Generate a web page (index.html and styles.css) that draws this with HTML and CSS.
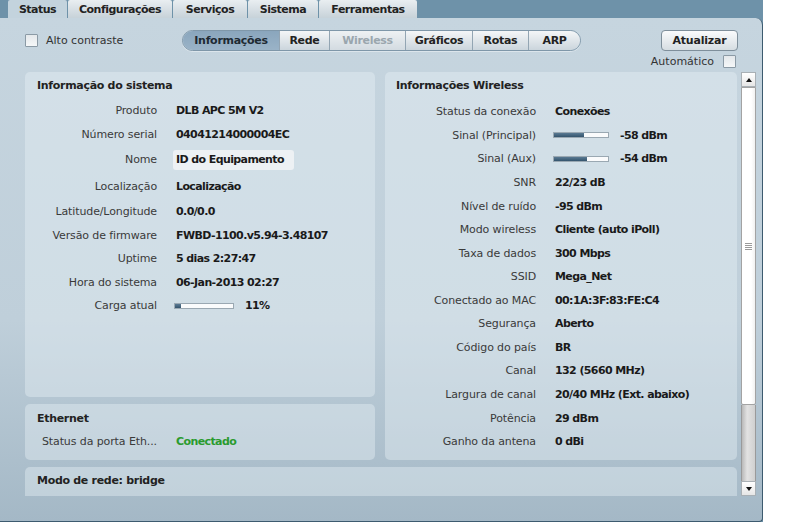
FILE: index.html
```html
<!DOCTYPE html>
<html lang="pt">
<head>
<meta charset="utf-8">
<title>Status</title>
<link rel="stylesheet" href="styles.css">
</head>
<body>
<div class="app">
  <nav class="tabs">
    <div class="tab tab-active w-status">Status</div>
    <div class="tab w-config">Configurações</div>
    <div class="tab w-serv">Serviços</div>
    <div class="tab w-sis">Sistema</div>
    <div class="tab w-ferr">Ferramentas</div>
  </nav>
  <main class="main">
    <div class="toolbar">
      <label class="contrast"><span class="check"></span>Alto contraste</label>
      <div class="seg">
        <div class="seg-item seg-active s1">Informações</div>
        <div class="seg-item s2">Rede</div>
        <div class="seg-item seg-disabled s3">Wireless</div>
        <div class="seg-item s4">Gráficos</div>
        <div class="seg-item s5">Rotas</div>
        <div class="seg-item s6">ARP</div>
      </div>
      <button class="btn">Atualizar</button>
    </div>
    <div class="autorow"><span>Automático</span><span class="check"></span></div>
    <div class="scrollwrap">
      <div class="content">
        <div class="cols">
          <div class="leftcol">
            <section class="panel sys">
              <h2 class="ptitle">Informação do sistema</h2>
              <div class="rows">
                <div class="row"><span class="lbl">Produto</span><span class="val">DLB APC 5M V2</span></div>
                <div class="row"><span class="lbl">Número serial</span><span class="val">04041214000004EC</span></div>
                <div class="row tall"><span class="lbl">Nome</span><span class="val"><span class="field">ID do Equipamento</span></span></div>
                <div class="row tall"><span class="lbl">Localização</span><span class="val">Localização</span></div>
                <div class="row"><span class="lbl">Latitude/Longitude</span><span class="val">0.0/0.0</span></div>
                <div class="row"><span class="lbl">Versão de firmware</span><span class="val">FWBD-1100.v5.94-3.48107</span></div>
                <div class="row"><span class="lbl">Uptime</span><span class="val">5 dias 2:27:47</span></div>
                <div class="row"><span class="lbl">Hora do sistema</span><span class="val">06-Jan-2013 02:27</span></div>
                <div class="row"><span class="lbl">Carga atual</span><span class="val"><span class="bar bar-load"><span class="fill" style="width:11%"></span></span>11%</span></div>
              </div>
            </section>
            <section class="panel eth">
              <h2 class="ptitle">Ethernet</h2>
              <div class="row"><span class="lbl lbl-eth">Status da porta Eth...</span><span class="val ok">Conectado</span></div>
            </section>
          </div>
          <section class="panel wifi">
            <h2 class="ptitle">Informações Wireless</h2>
            <div class="rows wrows">
              <div class="row"><span class="lbl">Status da conexão</span><span class="val">Conexões</span></div>
              <div class="row"><span class="lbl">Sinal (Principal)</span><span class="val"><span class="bar bar-sig"><span class="fill" style="width:56%"></span></span>-58 dBm</span></div>
              <div class="row"><span class="lbl">Sinal (Aux)</span><span class="val"><span class="bar bar-sig"><span class="fill" style="width:62%"></span></span>-54 dBm</span></div>
              <div class="row"><span class="lbl">SNR</span><span class="val">22/23 dB</span></div>
              <div class="row"><span class="lbl">Nível de ruído</span><span class="val">-95 dBm</span></div>
              <div class="row"><span class="lbl">Modo wireless</span><span class="val">Cliente (auto iPoll)</span></div>
              <div class="row"><span class="lbl">Taxa de dados</span><span class="val">300 Mbps</span></div>
              <div class="row"><span class="lbl">SSID</span><span class="val">Mega_Net</span></div>
              <div class="row"><span class="lbl">Conectado ao MAC</span><span class="val">00:1A:3F:83:FE:C4</span></div>
              <div class="row"><span class="lbl">Segurança</span><span class="val">Aberto</span></div>
              <div class="row"><span class="lbl">Código do país</span><span class="val">BR</span></div>
              <div class="row"><span class="lbl">Canal</span><span class="val">132 (5660 MHz)</span></div>
              <div class="row"><span class="lbl">Largura de canal</span><span class="val">20/40 MHz (Ext. abaixo)</span></div>
              <div class="row"><span class="lbl">Potência</span><span class="val">29 dBm</span></div>
              <div class="row"><span class="lbl">Ganho da antena</span><span class="val">0 dBi</span></div>
            </div>
          </section>
        </div>
        <section class="panel mode">Modo de rede: bridge</section>
      </div>
      <div class="scrollbar">
        <div class="sb-btn"><span class="arr-up"></span></div>
        <div class="sb-thumb"><span class="grip"></span></div>
        <div class="sb-track"></div>
        <div class="sb-btn"><span class="arr-down"></span></div>
      </div>
    </div>
  </main>
</div>
</body>
</html>
```
FILE: styles.css
```css
* { box-sizing: border-box; }
html, body { margin: 0; padding: 0; background: #fff; }
body { font-family: "DejaVu Sans", Verdana, sans-serif; font-size: 11px; color: #2b2b2b; }

.app { width: 763px; height: 522px; background: #6e92a9; display: flex; flex-direction: column; }

.tabs { height: 18px; display: flex; gap: 1px; padding-left: 8px; }
.tab { height: 18px; display: flex; align-items: center; justify-content: center;
  font-weight: bold; color: #222; letter-spacing: -0.5px;
  background: linear-gradient(#e9eef1, #c7d2d9); border-radius: 2px 2px 0 0; }
.tab-active { background: #c3d3dd; }
.w-status { width: 59px; }
.w-config { width: 104px; }
.w-serv { width: 74px; }
.w-sis { width: 70px; }
.w-ferr { width: 98px; }

.main { flex: 1; background: linear-gradient(#c6d5df 0%, #bfcfda 60%, #a4b8c6 100%);
  border-right: 1px solid #3d5b6f; border-bottom: 1px solid #3d5b6f;
  border-radius: 0 7px 4px 0; padding-top: 12px; }

.toolbar { display: flex; align-items: center; height: 20px; padding-left: 25px; padding-right: 24px; }
.contrast { width: 157px; display: flex; align-items: center; gap: 8px; color: #333; }
.check { width: 13px; height: 13px; border: 1px solid #8b9aa5; background: linear-gradient(#e4e8eb, #f5f7f8); border-radius: 1px; display: inline-block; }

.seg { display: flex; height: 21px; border: 1px solid #7f97a9; border-radius: 11px; overflow: hidden; box-shadow: 0 1px 0 rgba(255,255,255,0.4); }
.seg-item { display: flex; align-items: center; justify-content: center; font-weight: bold; color: #222;
  background: linear-gradient(#f4f6f8, #cbd5dc); border-left: 1px solid #93a5b3; letter-spacing: -0.3px; }
.seg-item:first-child { border-left: none; }
.seg-active { background: linear-gradient(#8aa6bd, #9ab3c7); color: #1e2a33; }
.seg-disabled { color: #9aa6ae; background: linear-gradient(#eef1f3, #d3dbe1); }
.s1 { width: 96px; } .s2 { width: 50px; } .s3 { width: 76px; } .s4 { width: 67px; } .s5 { width: 56px; } .s6 { width: 52px; }

.btn { margin-left: auto; width: 77px; height: 21px; font-family: inherit; font-size: 11px; font-weight: bold; color: #222;
  border: 1px solid #7f8f9b; border-radius: 4px; background: linear-gradient(#fafbfc, #d6dde2); padding: 0; letter-spacing: -0.2px; }

.autorow { height: 18px; display: flex; justify-content: flex-end; align-items: center; gap: 9px; padding-right: 26px; color: #333; margin-top: 2px; }

.scrollwrap { display: flex; gap: 4px; margin-left: 25px; margin-top: 2px; height: 424px; }
.content { width: 712px; display: flex; flex-direction: column; gap: 7px; overflow: hidden; }
.cols { display: flex; gap: 10px; }
.leftcol { width: 350px; display: flex; flex-direction: column; gap: 7px; }

.panel { background: rgba(232, 240, 245, 0.42); border-radius: 5px; padding: 7px 0 0 0; }
.ptitle { margin: 0 0 6px 12px; font-size: 11px; line-height: 14px; font-weight: bold; color: #222; letter-spacing: -0.3px; }
.sys { height: 325px; }
.eth { height: 56px; padding-top: 8px; }
.wifi { width: 352px; height: 388px; }
.wifi .ptitle { margin-left: 11px; margin-bottom: 7px; }
.mode { height: 40px; border-radius: 5px 5px 0 0; padding: 7px 12px; font-weight: bold; color: #222; line-height: 14px; letter-spacing: -0.3px; }

.row { display: flex; align-items: center; height: 23.5px; }
.row.tall { height: 27px; }
.wrows .row { height: 23.57px; }
.lbl { width: 132px; text-align: right; color: #3a3a3a; white-space: nowrap; letter-spacing: -0.12px; }
.wifi .lbl { width: 151px; }
.val { margin-left: 19px; font-weight: bold; color: #1a1a1a; display: flex; align-items: center; white-space: nowrap; letter-spacing: -0.6px; }
.lbl-eth { width: 132px; overflow: hidden; letter-spacing: -0.1px; }
.eth .ptitle { margin-bottom: 4px; }
.ok { color: #2a9b2e; }

.field { display: inline-block; background: #edf1f4; border-radius: 3px; padding: 0 3px; height: 20px; line-height: 20px; width: 121px; margin-left: -3px; }

.bar { display: inline-block; height: 6px; background: #fafbfc; border: 1px solid #9aa8b2; position: relative; }
.bar .fill { display: block; height: 100%; background: linear-gradient(#5a7a93, #34546d); }
.bar-load { width: 60px; margin-left: -2px; margin-right: 11px; }
.bar-sig { width: 56px; margin-left: -2px; margin-right: 11px; }

.scrollbar { width: 15px; display: flex; flex-direction: column; }
.sb-btn { height: 15px; background: linear-gradient(#ffffff, #e6e6e6); border: 1px solid #a9b0b5; display: flex; align-items: center; justify-content: center; }
.arr-up { width: 0; height: 0; border-left: 3px solid transparent; border-right: 3px solid transparent; border-bottom: 4px solid #111; }
.arr-down { width: 0; height: 0; border-left: 3px solid transparent; border-right: 3px solid transparent; border-top: 4px solid #111; }
.sb-thumb { height: 318px; background: linear-gradient(90deg, #ffffff 70%, #f1f1f1); border: 1px solid #a3a3a3; border-radius: 0 0 2px 2px; display: flex; align-items: center; justify-content: center; }
.grip { width: 7px; height: 7px; background: repeating-linear-gradient(#9a9a9a 0 1px, transparent 1px 2px); }
.sb-track { flex: 1; background: linear-gradient(90deg, #b9b9b9, #e2e2e2 40%, #d0d0d0); border-left: 1px solid #9a9a9a; border-right: 1px solid #9a9a9a; }
```
